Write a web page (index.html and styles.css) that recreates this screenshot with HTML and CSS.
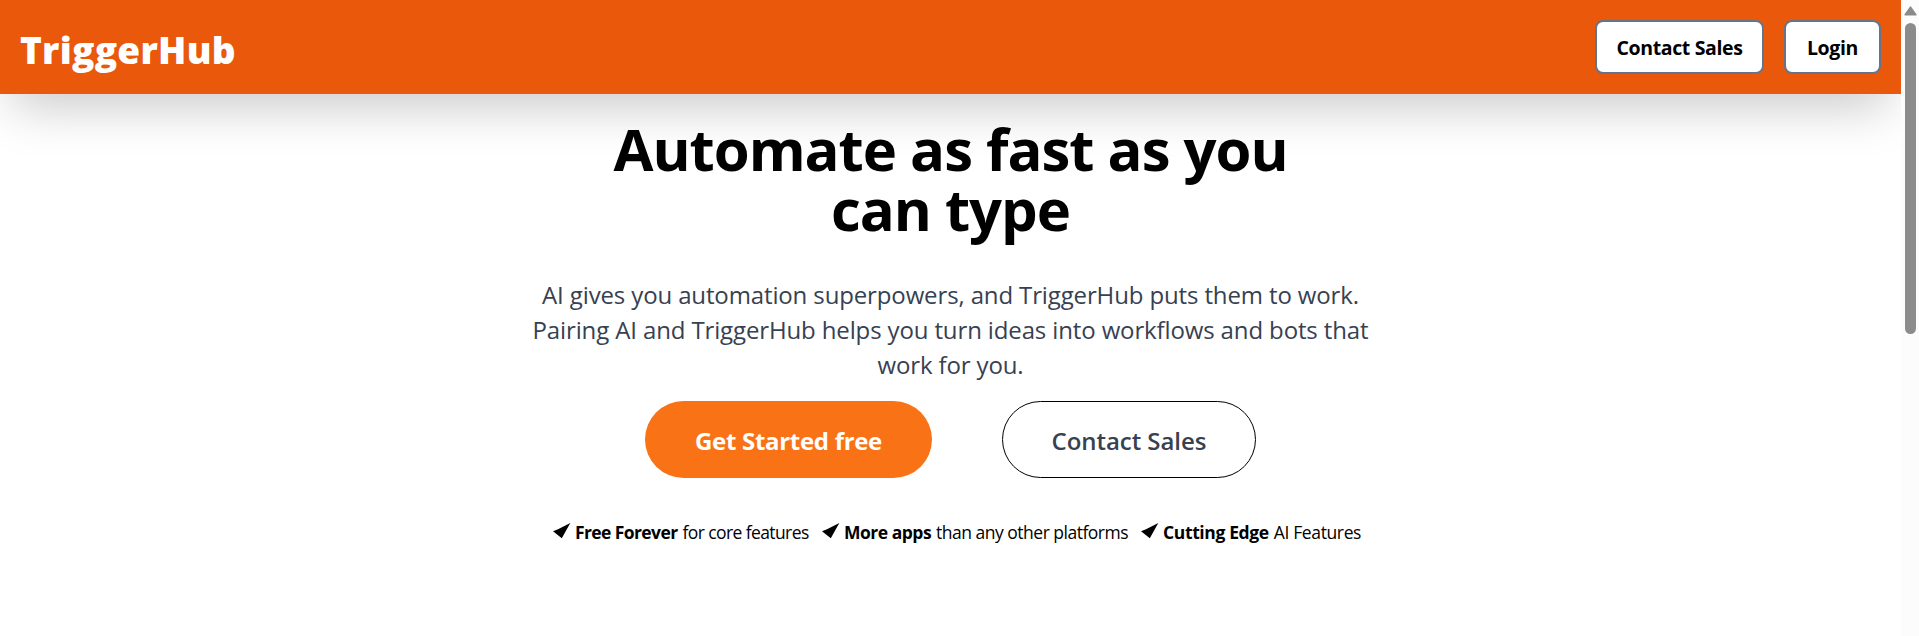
FILE: index.html
```html
<!DOCTYPE html>
<html lang="en">
<head>
<meta charset="utf-8">
<title>TriggerHub</title>
<link rel="stylesheet" href="styles.css">
</head>
<body>
<div class="page">
  <header class="header">
    <div class="logo">TriggerHub</div>
    <nav class="nav">
      <a class="nav-button nav-contact">Contact Sales</a>
      <a class="nav-button nav-login">Login</a>
    </nav>
  </header>
  <main class="hero">
    <h1 class="title">Automate as fast as you<br>can type</h1>
    <p class="lead">AI gives you automation superpowers, and TriggerHub puts them to work.<br>Pairing AI and TriggerHub helps you turn ideas into workflows and bots that<br>work for you.</p>
    <div class="actions">
      <a class="action primary">Get Started free</a>
      <a class="action secondary">Contact Sales</a>
    </div>
    <ul class="features">
      <li class="feature feature-free">
        <svg class="check" viewBox="0 0 18 16"><path d="M0 8.2 L5 6.3 L17.3 0 L8.8 15.3 Z"/></svg>
        <b>Free Forever</b><span>for core features</span>
      </li>
      <li class="feature feature-apps">
        <svg class="check" viewBox="0 0 18 16"><path d="M0 8.2 L5 6.3 L17.3 0 L8.8 15.3 Z"/></svg>
        <b>More apps</b><span>than any other platforms</span>
      </li>
      <li class="feature feature-edge">
        <svg class="check" viewBox="0 0 18 16"><path d="M0 8.2 L5 6.3 L17.3 0 L8.8 15.3 Z"/></svg>
        <b>Cutting Edge</b><span>AI Features</span>
      </li>
    </ul>
  </main>
</div>
<aside class="scrollbar">
  <svg class="scroll-arrow" viewBox="0 0 13 10"><path d="M6.5 1.2 L11.8 8.8 H1.2 Z"/></svg>
  <div class="scroll-thumb"></div>
</aside>
</body>
</html>
```
FILE: styles.css
```css
* { box-sizing: border-box; }

body {
  margin: 0;
  height: 636px;
  display: flex;
  overflow: hidden;
  background: #fff;
  color: #000;
  font-family: "Open Sans", "Noto Sans", sans-serif;
}

.page { width: 1901px; overflow: hidden; }

.header {
  height: 94px;
  padding: 20px 20px 0;
  display: flex;
  justify-content: space-between;
  align-items: flex-start;
  background: #ea580c;
  box-shadow: 0 25px 50px -12px rgba(0, 0, 0, .21);
}

.logo {
  padding-top: 5px;
  color: #fff;
  font-size: 37px;
  line-height: 50px;
  font-weight: 800;
  letter-spacing: .25px;
}

.nav { display: flex; gap: 20px; }

.nav-button {
  height: 54px;
  border: 2px solid #64748b;
  border-radius: 8px;
  background: #fff;
  text-align: center;
  white-space: nowrap;
  font-size: 19.5px;
  line-height: 52px;
  font-weight: 700;
  letter-spacing: -.35px;
}
.nav-contact { width: 169px; }
.nav-login { width: 97px; }

.hero { padding-top: 25px; }

.title {
  margin: 0;
  text-align: center;
  font-size: 58px;
  line-height: 60px;
  font-weight: 700;
  letter-spacing: -1px;
}

.lead {
  margin: 38px 0 19px;
  text-align: center;
  color: #374151;
  font-size: 24px;
  line-height: 35px;
  letter-spacing: -.13px;
}

.actions { display: flex; justify-content: center; gap: 70px; }

.action {
  height: 77px;
  border-radius: 39px;
  text-align: center;
  font-size: 24px;
  line-height: 79px;
}
.primary {
  width: 287px;
  background: #f97316;
  color: #fff;
  font-weight: 700;
  letter-spacing: -.3px;
}
.secondary {
  width: 254px;
  border: 1px solid #000;
  color: #374151;
  font-weight: 560;
  line-height: 77px;
  letter-spacing: -.05px;
}

.features {
  margin: 40px 0 0;
  padding: 0 0 0 553px;
  display: flex;
  list-style: none;
  font-size: 17.5px;
  line-height: 28px;
}
.feature { display: flex; white-space: nowrap; }
.feature-free { width: 269px; letter-spacing: -.6px; }
.feature-apps { width: 319px; letter-spacing: -.5px; }
.feature-edge { width: 240px; letter-spacing: -.37px; }
.feature b { margin-right: 5px; }
.check { width: 18px; height: 16px; margin: 5px 4px 0 0; }

.scrollbar {
  width: 18px;
  background: #fcfcfc;
  display: flex;
  flex-direction: column;
  align-items: center;
}
.scroll-arrow {
  width: 13px;
  height: 10px;
  margin: 6px 0 7px;
  fill: #8b8b8b;
  stroke: #8b8b8b;
  stroke-width: 1.6;
  stroke-linejoin: round;
}
.scroll-thumb {
  width: 11px;
  height: 311px;
  border-radius: 6px;
  background: #8b8b8b;
}
```
